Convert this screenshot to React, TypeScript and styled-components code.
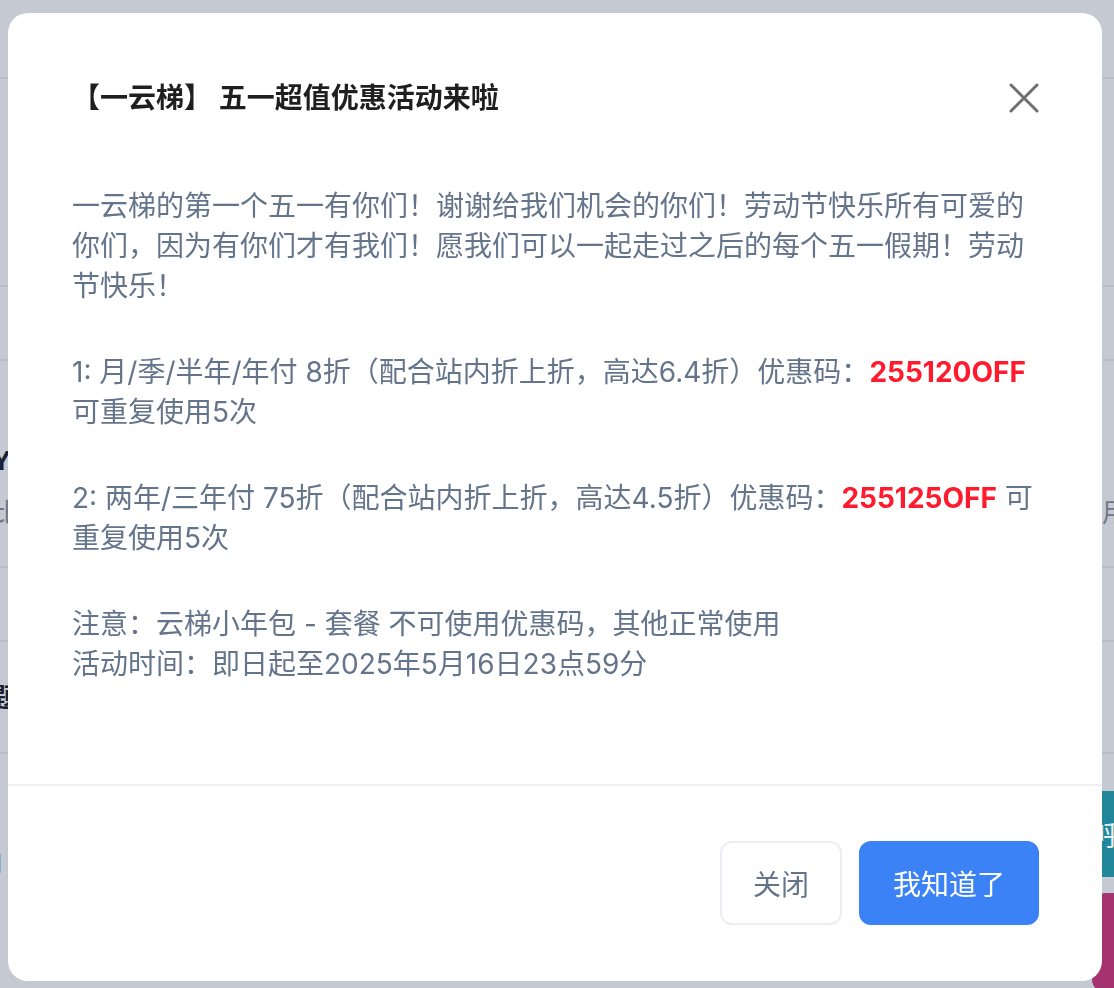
import React from 'react';
import styled, { createGlobalStyle } from 'styled-components';

const GlobalStyle = createGlobalStyle`
  html, body {
    margin: 0;
    padding: 0;
    background: #c5c9d2;
  }
  body {
    font-family: 'Inter', 'Noto Sans CJK SC', 'Noto Sans', sans-serif;
    -webkit-font-smoothing: antialiased;
  }
`;

const Page = styled.div`
  width: 1114px;
  height: 988px;
  overflow: hidden;
  display: flex;
  flex-direction: column;
`;

const Row = styled.div<{ $h: number; $line?: boolean }>`
  height: ${(p) => p.$h}px;
  flex-shrink: 0;
  box-sizing: border-box;
  border-bottom: ${(p) => (p.$line ? '2px solid #babec8' : 'none')};
  display: flex;
  justify-content: space-between;
  align-items: flex-start;
`;

const Side = styled.div<{ $top: number; $gap?: number }>`
  display: flex;
  flex-direction: column;
  padding-top: ${(p) => p.$top}px;
  gap: ${(p) => p.$gap ?? 20}px;
`;

const Frag = styled.span<{ $dark?: boolean }>`
  font-size: 26px;
  line-height: 32px;
  font-weight: ${(p) => (p.$dark ? 700 : 400)};
  color: ${(p) => (p.$dark ? '#1c2030' : '#6c7688')};
  margin-left: -8px;
`;

const RightFrag = styled(Frag)`
  margin-left: 0;
  margin-right: -14px;
`;

const Teal = styled.div`
  width: 40px;
  height: 86px;
  margin-top: 37px;
  margin-right: -20px;
  background: #22879a;
  color: #e6eef2;
  font-size: 28px;
  display: flex;
  align-items: center;
  padding-left: 2px;
`;

const Magenta = styled.div`
  width: 40px;
  height: 100px;
  margin-right: -20px;
  border-radius: 14px 0 0 14px;
  background: #a43370;
`;

const Overlay = styled.div`
  position: fixed;
  inset: 0;
  padding: 13px 12px 7px 8px;
  display: flex;
`;

const Modal = styled.div`
  flex: 1;
  background: #ffffff;
  border-radius: 20px;
  display: flex;
  flex-direction: column;
  overflow: hidden;
`;

const Header = styled.div`
  display: flex;
  align-items: center;
  justify-content: space-between;
  padding: 64px 63px 0 64px;
`;

const Title = styled.h2`
  margin: 0;
  font-size: 28px;
  line-height: 42px;
  font-weight: 700;
  color: #1f1f1f;
`;

const CloseIcon = styled.button`
  width: 30px;
  height: 30px;
  padding: 0;
  border: none;
  background: none;
  display: flex;
  cursor: pointer;
`;

const Body = styled.div`
  flex: 1;
  padding: 67px 64px 0 64px;
  font-size: 28px;
  line-height: 40px;
  color: #64748b;
`;

const Para = styled.p`
  margin: 0 0 46px 0;
`;

const Code = styled.span`
  color: #ff1a2e;
  font-weight: 700;
`;

const Footer = styled.div`
  border-top: 2px solid #eef0f4;
  display: flex;
  justify-content: flex-end;
  gap: 17px;
  padding: 55px 63px 56px 64px;
`;

const Button = styled.button<{ $primary?: boolean }>`
  height: 84px;
  padding: 0 ${(p) => (p.$primary ? 32 : 31)}px;
  box-sizing: border-box;
  border-radius: 12px;
  border: 2px solid ${(p) => (p.$primary ? '#3b82f6' : '#eceef3')};
  background: ${(p) => (p.$primary ? '#3b82f6' : '#ffffff')};
  color: ${(p) => (p.$primary ? '#ffffff' : '#64748b')};
  font-family: inherit;
  font-size: 28px;
  cursor: pointer;
`;

export default function App() {
  return (
    <>
      <GlobalStyle />
      <Page>
        <Row $h={79} $line />
        <Row $h={208} $line />
        <Row $h={74} $line />
        <Row $h={207} $line>
          <Side $top={84}>
            <Frag $dark>Y</Frag>
            <Frag>比</Frag>
          </Side>
          <Side $top={136}>
            <RightFrag>用</RightFrag>
          </Side>
        </Row>
        <Row $h={74} $line />
        <Row $h={112} $line>
          <Side $top={40}>
            <Frag $dark>题</Frag>
          </Side>
        </Row>
        <Row $h={234}>
          <Side $top={94}>
            <Frag>1</Frag>
            <Frag $dark style={{ marginTop: 46 }}>:</Frag>
          </Side>
          <Side $top={0} $gap={16}>
            <Teal>呼</Teal>
            <Magenta />
          </Side>
        </Row>
      </Page>
      <Overlay>
        <Modal>
          <Header>
            <Title>【一云梯】 五一超值优惠活动来啦</Title>
            <CloseIcon aria-label="关闭">
              <svg width="30" height="30" viewBox="0 0 30 30">
                <path d="M2 2 L28 28 M28 2 L2 28" stroke="#6f6f6f" strokeWidth="3" strokeLinecap="round" />
              </svg>
            </CloseIcon>
          </Header>
          <Body>
            <Para>
              一云梯的第一个五一有你们！谢谢给我们机会的你们！劳动节快乐所有可爱的你们，因为有你们才有我们！愿我们可以一起走过之后的每个五一假期！劳动节快乐！
            </Para>
            <Para>
              1: 月/季/半年/年付 8折（配合站内折上折，高达6.4折）优惠码：<Code>255120OFF</Code> 可重复使用5次
            </Para>
            <Para>
              2: 两年/三年付 75折（配合站内折上折，高达4.5折）优惠码：<Code>255125OFF</Code> 可重复使用5次
            </Para>
            <Para>
              注意：云梯小年包 - 套餐 不可使用优惠码，其他正常使用
              <br />
              活动时间：即日起至2025年5月16日23点59分
            </Para>
          </Body>
          <Footer>
            <Button>关闭</Button>
            <Button $primary>我知道了</Button>
          </Footer>
        </Modal>
      </Overlay>
    </>
  );
}
